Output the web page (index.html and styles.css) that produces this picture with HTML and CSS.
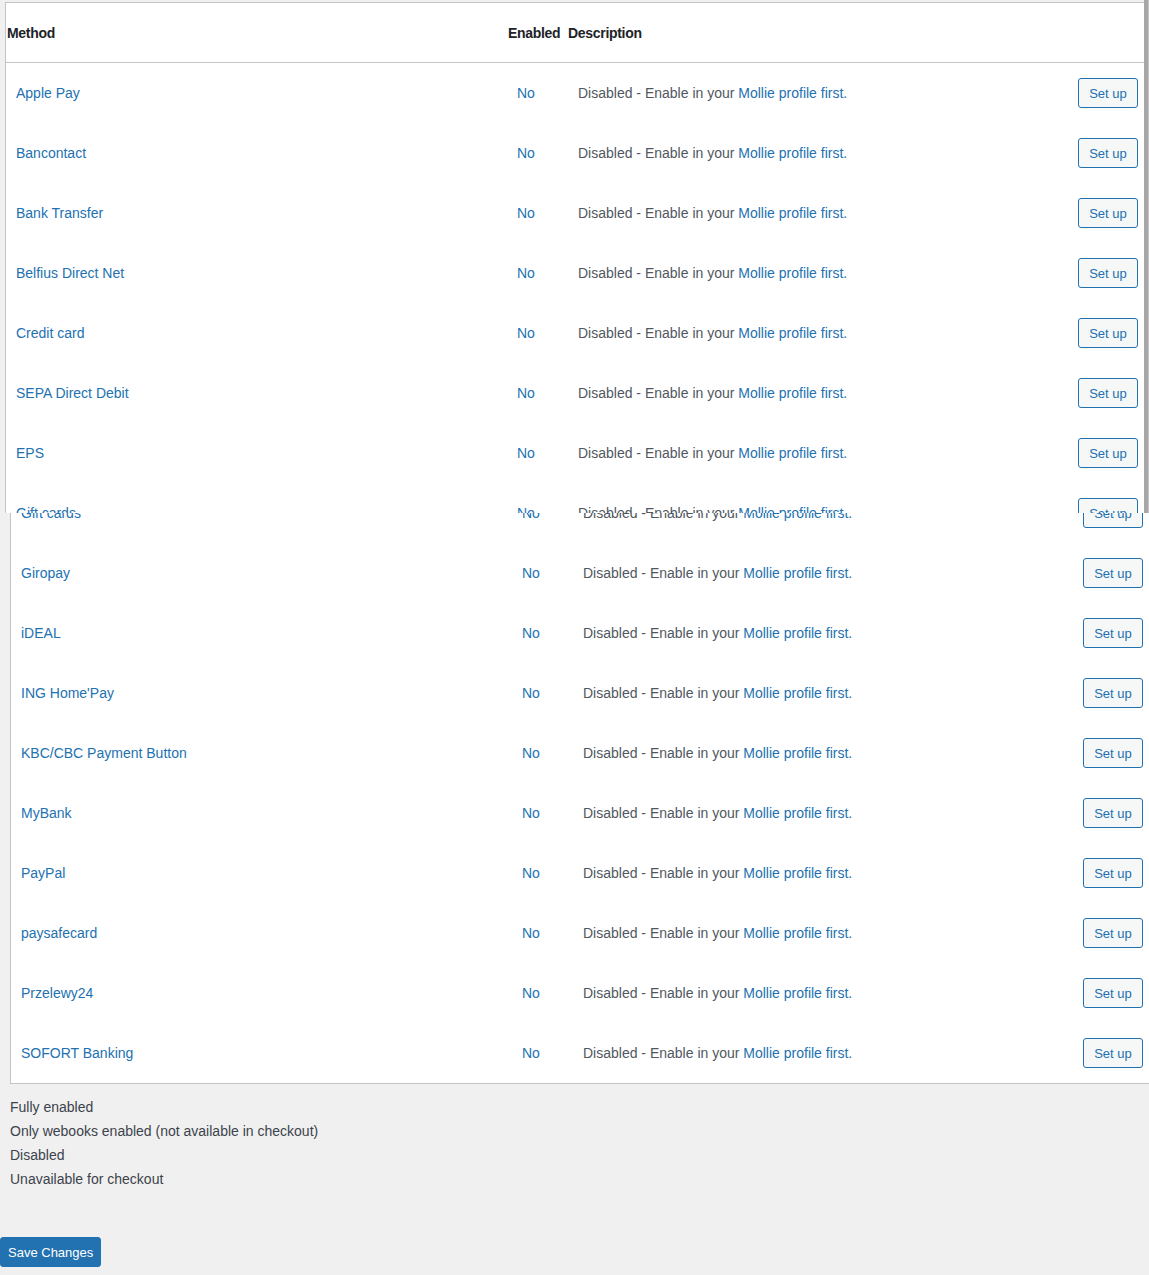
FILE: index.html
```html
<!DOCTYPE html>
<html>
<head>
<meta charset="utf-8">
<title>Payment methods</title>
<link rel="stylesheet" href="styles.css">
</head>
<body>
<div class="top">
  <div class="table">
    <div class="head">
      <div class="h">Method</div>
      <div class="h">Enabled</div>
      <div class="h">Description</div>
      <div class="h"></div>
    </div>
    <div class="row"><a class="c name">Apple Pay</a><span class="c no">No</span><span class="c desc">Disabled - Enable in your <a class="lnk">Mollie profile first.</a></span><span class="act"><a class="btn">Set up</a></span></div>
    <div class="row"><a class="c name">Bancontact</a><span class="c no">No</span><span class="c desc">Disabled - Enable in your <a class="lnk">Mollie profile first.</a></span><span class="act"><a class="btn">Set up</a></span></div>
    <div class="row"><a class="c name">Bank Transfer</a><span class="c no">No</span><span class="c desc">Disabled - Enable in your <a class="lnk">Mollie profile first.</a></span><span class="act"><a class="btn">Set up</a></span></div>
    <div class="row"><a class="c name">Belfius Direct Net</a><span class="c no">No</span><span class="c desc">Disabled - Enable in your <a class="lnk">Mollie profile first.</a></span><span class="act"><a class="btn">Set up</a></span></div>
    <div class="row"><a class="c name">Credit card</a><span class="c no">No</span><span class="c desc">Disabled - Enable in your <a class="lnk">Mollie profile first.</a></span><span class="act"><a class="btn">Set up</a></span></div>
    <div class="row"><a class="c name">SEPA Direct Debit</a><span class="c no">No</span><span class="c desc">Disabled - Enable in your <a class="lnk">Mollie profile first.</a></span><span class="act"><a class="btn">Set up</a></span></div>
    <div class="row"><a class="c name">EPS</a><span class="c no">No</span><span class="c desc">Disabled - Enable in your <a class="lnk">Mollie profile first.</a></span><span class="act"><a class="btn">Set up</a></span></div>
    <div class="row"><a class="c name">Gift cards</a><span class="c no">No</span><span class="c desc">Disabled - Enable in your <a class="lnk">Mollie profile first.</a></span><span class="act"><a class="btn">Set up</a></span></div>
  </div>
  <div class="bar"></div>
</div>
<div class="bottom">
  <div class="rows">
    <div class="row"><a class="c name">Gift cards</a><span class="c no">No</span><span class="c desc">Disabled - Enable in your <a class="lnk">Mollie profile first.</a></span><span class="act"><a class="btn">Set up</a></span></div>
    <div class="row"><a class="c name">Giropay</a><span class="c no">No</span><span class="c desc">Disabled - Enable in your <a class="lnk">Mollie profile first.</a></span><span class="act"><a class="btn">Set up</a></span></div>
    <div class="row"><a class="c name">iDEAL</a><span class="c no">No</span><span class="c desc">Disabled - Enable in your <a class="lnk">Mollie profile first.</a></span><span class="act"><a class="btn">Set up</a></span></div>
    <div class="row"><a class="c name">ING Home'Pay</a><span class="c no">No</span><span class="c desc">Disabled - Enable in your <a class="lnk">Mollie profile first.</a></span><span class="act"><a class="btn">Set up</a></span></div>
    <div class="row"><a class="c name">KBC/CBC Payment Button</a><span class="c no">No</span><span class="c desc">Disabled - Enable in your <a class="lnk">Mollie profile first.</a></span><span class="act"><a class="btn">Set up</a></span></div>
    <div class="row"><a class="c name">MyBank</a><span class="c no">No</span><span class="c desc">Disabled - Enable in your <a class="lnk">Mollie profile first.</a></span><span class="act"><a class="btn">Set up</a></span></div>
    <div class="row"><a class="c name">PayPal</a><span class="c no">No</span><span class="c desc">Disabled - Enable in your <a class="lnk">Mollie profile first.</a></span><span class="act"><a class="btn">Set up</a></span></div>
    <div class="row"><a class="c name">paysafecard</a><span class="c no">No</span><span class="c desc">Disabled - Enable in your <a class="lnk">Mollie profile first.</a></span><span class="act"><a class="btn">Set up</a></span></div>
    <div class="row"><a class="c name">Przelewy24</a><span class="c no">No</span><span class="c desc">Disabled - Enable in your <a class="lnk">Mollie profile first.</a></span><span class="act"><a class="btn">Set up</a></span></div>
    <div class="row"><a class="c name">SOFORT Banking</a><span class="c no">No</span><span class="c desc">Disabled - Enable in your <a class="lnk">Mollie profile first.</a></span><span class="act"><a class="btn">Set up</a></span></div>
  </div>
</div>
<div class="legend">
  <div>Fully enabled</div>
  <div>Only webooks enabled (not available in checkout)</div>
  <div>Disabled</div>
  <div>Unavailable for checkout</div>
</div>
<div class="submit"><a class="save">Save Changes</a></div>
</body>
</html>
```
FILE: styles.css
```css
body {
  margin: 0;
  background: #f0f0f1;
  font-family: "Liberation Sans", Arial, sans-serif;
  font-size: 14px;
  color: #3c434a;
}

.top {
  display: flex;
  height: 513px;
  overflow: hidden;
}

.top .table {
  margin: 2px 0 0 5px;
  width: 1139px;
  flex: none;
  box-sizing: border-box;
  background: #fff;
  border-left: 1px solid #c3c4c7;
  border-top: 1px solid #c3c4c7;
}

.bar {
  width: 5px;
  flex: none;
  background: #a7a7a7;
  box-shadow: inset -1px 0 0 #c4c4c4;
}

.head {
  display: grid;
  grid-template-columns: 501px 60px 1fr 72px;
  height: 59px;
  align-items: center;
  border-bottom: 1px solid #c3c4c7;
  font-weight: bold;
  letter-spacing: -0.3px;
  color: #1d2327;
}

.head .h {
  padding-left: 1px;
}

.row {
  display: grid;
  grid-template-columns: 501px 60px 1fr 72px;
  height: 60px;
  align-items: center;
}

.row .c {
  padding-left: 10px;
}

.row .desc {
  padding-left: 11px;
}

.name,
.no,
.lnk {
  color: #2271b1;
}

.desc {
  color: #50575e;
}

.act {
  display: flex;
  justify-content: flex-end;
  padding-right: 6px;
}

.btn {
  width: 60px;
  height: 30px;
  box-sizing: border-box;
  display: flex;
  align-items: center;
  justify-content: center;
  border: 1px solid #2271b1;
  border-radius: 3px;
  background: #f6f7f7;
  color: #2271b1;
  font-size: 13px;
}

.bottom {
  margin-left: 10px;
  width: 1139px;
  height: 571px;
  box-sizing: border-box;
  background: #fff;
  border-left: 1px solid #c3c4c7;
  border-bottom: 1px solid #c3c4c7;
  overflow: hidden;
}

.bottom .rows {
  margin-top: -30px;
}

.legend {
  padding: 11px 0 0 10px;
  line-height: 24px;
}

.submit {
  margin-top: 46px;
  display: flex;
}

.save {
  height: 30px;
  box-sizing: border-box;
  display: flex;
  align-items: center;
  padding: 0 7px;
  background: #2271b1;
  border: 1px solid #2271b1;
  border-radius: 3px;
  color: #fff;
  font-size: 13px;
}
```
